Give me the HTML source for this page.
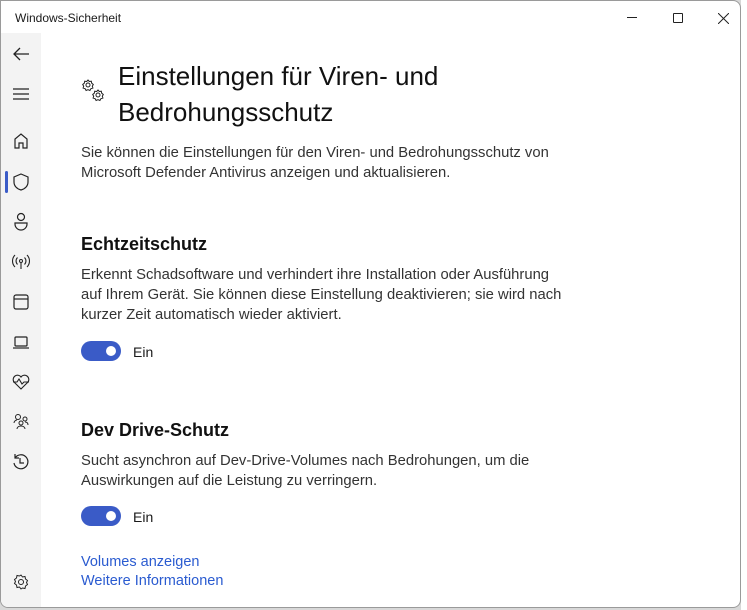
<!DOCTYPE html>
<html><head><meta charset="utf-8"><style>
*{margin:0;padding:0;box-sizing:border-box}
body{width:747px;height:610px;background:#d8d8d8;position:relative;overflow:hidden;font-family:"Liberation Sans",sans-serif;color:#1a1a1a}
.win{position:absolute;left:0;top:0;width:741px;height:608px;background:#fff;border:1px solid #9a9a9a;border-radius:0 8px 8px 8px;overflow:hidden}
.side{position:absolute;left:0;top:32px;width:40px;bottom:0;background:#f3f3f3}
.t{position:absolute;white-space:nowrap}
.ic{position:absolute;left:10px;width:20px;height:20px}
.p{font-size:14.8px;line-height:20px;color:#333;left:80px}
.h{font-size:18px;font-weight:bold;left:80px;color:#111}
.tog{position:absolute;left:80px;width:40px;height:20px;border-radius:10px;background:#3a5bc7}
.tog:after{content:"";position:absolute;right:5px;top:5px;width:10px;height:10px;border-radius:50%;background:#fff}
.lnk{font-size:14.5px;color:#2a5bd0;left:80px}
</style></head><body>
<div style="position:absolute;left:741px;top:0;width:6px;height:610px;background:#fff"></div>
<div class="win">
<div class="t" style="left:14px;top:10px;font-size:12px">Windows-Sicherheit</div>
<div style="position:absolute;left:626px;top:16px;width:10px;height:1px;background:#222"></div>
<div style="position:absolute;left:672px;top:12px;width:10px;height:10px;border:1px solid #222;border-radius:1px"></div>
<svg style="position:absolute;left:717px;top:12px" width="11" height="11"><path d="M0 0L11 11M11 0L0 11" stroke="#222"/></svg>
<div class="side"></div>
<svg class="ic" style="top:43px" viewBox="0 0 20 20"><path d="M18 10H3M9 4L3 10l6 6" stroke="#222" stroke-width="1.3" fill="none"/></svg>
<svg class="ic" style="top:83px" viewBox="0 0 20 20"><path d="M2 5h16M2 10h16M2 15h16" stroke="#222" stroke-width="1.2"/></svg>
<svg class="ic" style="top:130px" viewBox="0 0 20 20"><path d="M4 17V8l6-5 6 5v9h-4v-5H8v5z" stroke="#222" stroke-width="1.2" fill="none"/></svg>
<div style="position:absolute;left:4px;top:170px;width:3px;height:22px;background:#3a5bc7;border-radius:2px"></div>
<svg class="ic" style="top:171px" viewBox="0 0 20 20"><path d="M10 2l7 3v5c0 4-3 7-7 8-4-1-7-4-7-8V5z" stroke="#222" stroke-width="1.2" fill="none"/></svg>
<svg class="ic" style="top:210px" viewBox="0 0 20 20"><circle cx="10" cy="6" r="3.5" stroke="#222" stroke-width="1.2" fill="none"/><path d="M4 12h12v1a5 5 0 0 1-12 0z" stroke="#222" stroke-width="1.2" fill="none"/></svg>
<svg class="ic" style="top:251px" viewBox="0 0 20 20"><circle cx="10" cy="9" r="1.5" stroke="#222" fill="none"/><path d="M10 11v6M6.5 5.5a5 5 0 0 0 0 7M13.5 5.5a5 5 0 0 1 0 7M4 3a8.5 8.5 0 0 0 0 12M16 3a8.5 8.5 0 0 1 0 12" stroke="#222" stroke-width="1.1" fill="none"/></svg>
<svg class="ic" style="top:291px" viewBox="0 0 20 20"><rect x="3" y="3" width="14" height="14" rx="2" stroke="#222" stroke-width="1.2" fill="none"/><path d="M3 7h14" stroke="#222" stroke-width="1.2"/></svg>
<svg class="ic" style="top:331px" viewBox="0 0 20 20"><rect x="4" y="5" width="12" height="9" rx="1" stroke="#222" stroke-width="1.2" fill="none"/><path d="M2 16h16" stroke="#222" stroke-width="1.2"/></svg>
<svg class="ic" style="top:371px" viewBox="0 0 20 20"><path d="M10 17l-7-7a4 4 0 0 1 7-5 4 4 0 0 1 7 5zM2 10h4l2-3 3 5 2-2h5" stroke="#222" stroke-width="1.1" fill="none"/></svg>
<svg class="ic" style="top:411px" viewBox="0 0 20 20"><circle cx="7" cy="5" r="2.5" stroke="#222" fill="none"/><circle cx="14" cy="7" r="2" stroke="#222" fill="none"/><circle cx="10" cy="11" r="2" stroke="#222" fill="none"/><path d="M3 11c0-2 2-3 3-3M6 17c0-2 2-3 4-3s4 1 4 3M14 10c2 0 3 1 3 3" stroke="#222" fill="none"/></svg>
<svg class="ic" style="top:451px" viewBox="0 0 20 20"><path d="M4 6a7 7 0 1 1-1 5M4 2v4h4M9 6v5h4" stroke="#222" stroke-width="1.2" fill="none"/></svg>
<svg class="ic" style="top:571px" viewBox="0 0 20 20"><circle cx="10" cy="10" r="2.5" stroke="#222" fill="none"/><path d="M10 3l1.5 2 2.5-.5.5 2.5 2 1.5-1 2 1 2-2 1.5-.5 2.5-2.5-.5L10 17l-1.5-2-2.5.5-.5-2.5-2-1.5 1-2-1-2 2-1.5.5-2.5 2.5.5z" stroke="#222" fill="none"/></svg>
<svg style="position:absolute;left:80px;top:77px" width="27" height="27" viewBox="0 0 27 27"><circle cx="7" cy="7" r="2" stroke="#222" fill="none"/><path d="M7 2l1.3 1.5 2-.3.4 2 1.6 1.3-1 1.7.6 1.9-2 .6-1 1.8L7 11.7l-1.9.8-1-1.8-2-.6.6-1.9-1-1.7L3.3 5.2l.4-2 2 .3z" stroke="#222" fill="none"/><circle cx="17" cy="17" r="2" stroke="#222" fill="none"/><path d="M17 12l1.3 1.5 2-.3.4 2 1.6 1.3-1 1.7.6 1.9-2 .6-1 1.8-1.9-.8-1.9.8-1-1.8-2-.6.6-1.9-1-1.7 1.6-1.3.4-2 2 .3z" stroke="#222" fill="none"/></svg>
<div class="t" style="left:117px;top:57px;font-size:26px;line-height:36px;color:#111">Einstellungen für Viren- und<br>Bedrohungsschutz</div>
<div class="t p" style="top:142px">Sie können die Einstellungen für den Viren- und Bedrohungsschutz von<br>Microsoft Defender Antivirus anzeigen und aktualisieren.</div>
<div class="t h" style="top:233px">Echtzeitschutz</div>
<div class="t p" style="top:264px">Erkennt Schadsoftware und verhindert ihre Installation oder Ausführung<br>auf Ihrem Gerät. Sie können diese Einstellung deaktivieren; sie wird nach<br>kurzer Zeit automatisch wieder aktiviert.</div>
<div class="tog" style="top:340px"></div>
<div class="t" style="left:132px;top:343px;font-size:14px">Ein</div>
<div class="t h" style="top:419px">Dev Drive-Schutz</div>
<div class="t p" style="top:450px">Sucht asynchron auf Dev-Drive-Volumes nach Bedrohungen, um die<br>Auswirkungen auf die Leistung zu verringern.</div>
<div class="tog" style="top:505px"></div>
<div class="t" style="left:132px;top:508px;font-size:14px">Ein</div>
<div class="t lnk" style="top:553px">Volumes anzeigen</div>
<div class="t lnk" style="top:572px">Weitere Informationen</div>
</div>
</body></html>
